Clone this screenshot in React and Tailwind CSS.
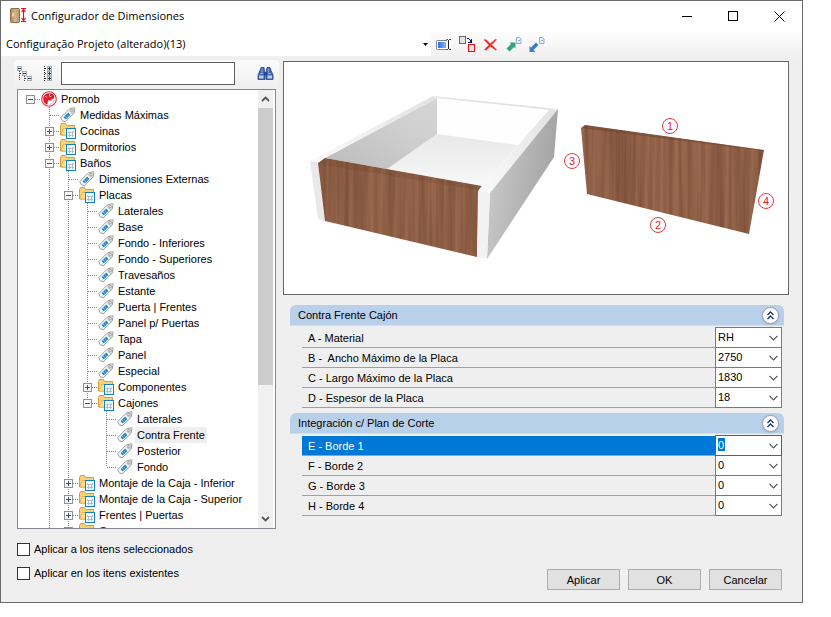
import { useState } from "react";

const tree = [
    { level: 0, label: "Promob", icon: "promob", open: true },
    { level: 1, label: "Medidas Máximas", icon: "tag" },
    { level: 1, label: "Cocinas", icon: "folder", open: false },
    { level: 1, label: "Dormitorios", icon: "folder", open: false },
    { level: 1, label: "Baños", icon: "folder", open: true },
    { level: 2, label: "Dimensiones Externas", icon: "tag" },
    { level: 2, label: "Placas", icon: "folder", open: true },
    { level: 3, label: "Laterales", icon: "tag" },
    { level: 3, label: "Base", icon: "tag" },
    { level: 3, label: "Fondo - Inferiores", icon: "tag" },
    { level: 3, label: "Fondo - Superiores", icon: "tag" },
    { level: 3, label: "Travesaños", icon: "tag" },
    { level: 3, label: "Estante", icon: "tag" },
    { level: 3, label: "Puerta | Frentes", icon: "tag" },
    { level: 3, label: "Panel p/ Puertas", icon: "tag" },
    { level: 3, label: "Tapa", icon: "tag" },
    { level: 3, label: "Panel", icon: "tag" },
    { level: 3, label: "Especial", icon: "tag" },
    { level: 3, label: "Componentes", icon: "folder", open: false },
    { level: 3, label: "Cajones", icon: "folder", open: true, last: true },
    { level: 4, label: "Laterales", icon: "tag" },
    { level: 4, label: "Contra Frente", icon: "tag" },
    { level: 4, label: "Posterior", icon: "tag" },
    { level: 4, label: "Fondo", icon: "tag", last: true },
    { level: 2, label: "Montaje de la Caja - Inferior", icon: "folder", open: false },
    { level: 2, label: "Montaje de la Caja - Superior", icon: "folder", open: false },
    { level: 2, label: "Frentes | Puertas", icon: "folder", open: false },
    { level: 2, label: "Camas", icon: "folder", open: false },
];

const sections = [
    {
        title: "Contra Frente Cajón",
        rows: [
            { id: "a", label: "A - Material", value: "RH" },
            { id: "b", label: "B -  Ancho Máximo de la Placa", value: "2750" },
            { id: "c", label: "C - Largo Máximo de la Placa", value: "1830" },
            { id: "d", label: "D - Espesor de la Placa", value: "18" },
        ],
    },
    {
        title: "Integración c/ Plan de Corte",
        rows: [
            { id: "e", label: "E - Borde 1", value: "0", selected: true },
            { id: "f", label: "F - Borde 2", value: "0" },
            { id: "g", label: "G - Borde 3", value: "0" },
            { id: "h", label: "H - Borde 4", value: "0" },
        ],
    },
];

function PromobIcon() {
    return (
        <svg width="16" height="16" viewBox="0 0 16 16" className="ml-px shrink-0">
            <circle cx="8" cy="8" r="7.3" fill="#fff" stroke="#d8303a" strokeWidth="1.100" />
            <path d="M9 2.200C5 1.800 2 4.500 2.200 8.200c.1 2.600 1.800 4.800 4.200 5.600l.6-4 1.600-.5 1.200.4.8-1.500 2.400-.7.300-2.500C12.500 3.300 11 2.400 9 2.200z" fill="#d8202c" />
            <path d="M8.800 2.500 8.300 5l1.800.8M4.500 5.500l1.700.8" stroke="#fff" strokeWidth=".7" fill="none" />
            <path d="M8 13.500c2.500-.2 4.500-1.800 5.500-4.200" stroke="#f0a0a4" strokeWidth=".8" fill="none" />
        </svg>
    );
}

function TagIcon() {
    return (
        <svg width="16" height="16" viewBox="0 0 16 16" className="ml-px shrink-0">
            <path d="M.8 10.500 9.500 1.800 14.200.7c.6 0 .9.300.8.900L14.200 6l-8.700 8.700-3.200-.9z" fill="#fafafa" stroke="#8f8f8f" strokeWidth=".9" />
            <path d="M9.800 2.500 14.200 1.500 13.500 5.700 12 7.200 8.600 3.800z" fill="#cfcfcf" />
            <path d="m3.500 10.300 4.700-4.700 2.300 2.300-4.700 4.700z" fill="#2389ca" />
            <path d="m5 9 2.200 2.200M6.600 7.400l2.200 2.200" stroke="#8cc9ec" strokeWidth=".7" />
            <circle cx="12" cy="3.700" r="1.200" fill="#fff" stroke="#8a8a8a" strokeWidth=".8" />
        </svg>
    );
}

function FolderIcon() {
    return (
        <svg width="16" height="16" viewBox="0 0 16 16" className="ml-px shrink-0">
            <path d="M.5 12V2.500l1-2h4l1.200 2h7.800V12z" fill="#f7d27a" stroke="#d69c3e" />
            <path d="m1 12 2.500-6.500H14V12z" fill="#fde294" stroke="#e0ab4e" strokeWidth=".8" />
            <rect x="6.500" y="5.500" width="9" height="10" fill="#fff" stroke="#1280bd" />
            <path d="M8 9.500h6M8 12.500h6M9.500 8v6M12.500 8v6" stroke="#a3c0e0" shapeRendering="crispEdges" />
            <path d="M8 8.500h2M12 8.500h2" stroke="#f6d583" shapeRendering="crispEdges" />
        </svg>
    );
}

function Dots({ d }) {
    return (
        <svg width="19" height="16" viewBox="0 0 19 16" className="absolute inset-0" shapeRendering="crispEdges">
            <path d={d} stroke="#808080" strokeDasharray="1 1" fill="none" />
        </svg>
    );
}

function TreeRow({ node, columns, selected, onSelect }) {
    const own = node.level === 0
        ? "M10 8.500H19"
        : node.last
            ? "M9.500 0V8M10 8.500H19"
            : "M9.500 0V16M10 8.500H19";
    return (
        <li role="treeitem" aria-selected={selected} className="flex h-4 items-center">
            {columns.map((line, i) => (
                <span key={i} className="relative h-4 w-[19px] shrink-0">
                    {line && <Dots d="M9.500 0V16" />}
                </span>
            ))}
            <span className="relative flex h-4 w-[19px] shrink-0 items-center justify-center">
                <Dots d={own} />
                {node.open !== undefined && (
                    <button type="button" aria-label={node.label} className="relative block h-[9px] w-[9px]">
                        <svg width="9" height="9" viewBox="0 0 9 9" shapeRendering="crispEdges">
                            <rect x=".5" y=".5" width="8" height="8" fill="#f8f8f8" stroke="#919191" />
                            <path d={node.open ? "M2 4.500h5" : "M2 4.500h5M4.500 2v5"} stroke="#33508f" />
                        </svg>
                    </button>
                )}
            </span>
            {node.icon === "promob" && <PromobIcon />}
            {node.icon === "tag" && <TagIcon />}
            {node.icon === "folder" && <FolderIcon />}
            <button
                type="button"
                onClick={onSelect}
                className={`ml-0.5 h-4 shrink-0 px-0.5 leading-4 whitespace-nowrap ${selected ? "bg-[#efefef]" : ""}`}
            >
                {node.label}
            </button>
        </li>
    );
}

function TreeView() {
    const [selected, setSelected] = useState(21);

    const rows = tree.map((node, index) => {
        const columns = [];
        for (let level = 0; level < node.level; level++) {
            let more = false;
            for (let i = index + 1; i < tree.length && level > 0; i++) {
                if (tree[i].level < level) break;
                if (tree[i].level === level) {
                    more = true;
                    break;
                }
            }
            columns.push(more || level === 1);
        }
        return { node, columns };
    });

    return (
        <div className="mx-[3px] flex min-h-0 flex-1 border border-[#828790] bg-white">
            <ul role="tree" className="min-h-0 flex-1 overflow-hidden pt-px pl-[3px]">
                {rows.map((row, i) => (
                    <TreeRow
                        key={i}
                        node={row.node}
                        columns={row.columns}
                        selected={i === selected}
                        onSelect={() => setSelected(i)}
                    />
                ))}
            </ul>
            <div className="mr-0.5 flex w-[15px] flex-col bg-[#f0f0f0]">
                <button type="button" aria-label="Subir" className="flex h-[18px] items-center justify-center">
                    <svg width="9" height="6" viewBox="0 0 9 6">
                        <path d="m1 5 3.500-3.500L8 5" fill="none" stroke="#555" strokeWidth="1.800" />
                    </svg>
                </button>
                <div className="flex-1">
                    <div className="h-[69%] bg-[#cdcdcd]" />
                </div>
                <button type="button" aria-label="Bajar" className="flex h-[18px] items-center justify-center">
                    <svg width="9" height="6" viewBox="0 0 9 6">
                        <path d="M1 1l3.500 3.500L8 1" fill="none" stroke="#555" strokeWidth="1.800" />
                    </svg>
                </button>
            </div>
        </div>
    );
}

function TitleBar() {
    return (
        <header className="flex h-[30px] items-center bg-white pl-2">
            <svg width="17" height="16" viewBox="0 0 17 16" className="mr-[5px] shrink-0">
                <defs>
                    <linearGradient id="door">
                        <stop offset="0" stopColor="#a48358" />
                        <stop offset=".5" stopColor="#d6b78a" />
                        <stop offset="1" stopColor="#b6956a" />
                    </linearGradient>
                </defs>
                <rect x="1.500" y=".5" width="9" height="14" rx="1" fill="url(#door)" stroke="#8a6c48" />
                <path d="M4 5v3.500" stroke="#f5eee2" strokeWidth="1.300" />
                <path d="M12 .5h5M12 13.500h5M14.500 1v12M12.500 4l2-2.500 2 2.500M12.500 10l2 2.500 2-2.500" fill="none" stroke="#e0102a" strokeWidth="1.200" />
            </svg>
            <h1 className="flex-1 font-['Open_Sans',sans-serif] text-[11px]">Configurador de Dimensiones</h1>
            <button type="button" aria-label="Minimizar" className="flex h-full w-[46px] items-center justify-center">
                <svg width="11" height="11" viewBox="0 0 11 11" shapeRendering="crispEdges">
                    <path d="M0 5.500h10" stroke="#000" />
                </svg>
            </button>
            <button type="button" aria-label="Maximizar" className="flex h-full w-[46px] items-center justify-center">
                <svg width="10" height="10" viewBox="0 0 10 10" shapeRendering="crispEdges">
                    <rect x=".5" y=".5" width="9" height="9" fill="none" stroke="#000" />
                </svg>
            </button>
            <button type="button" aria-label="Cerrar" className="flex h-full w-[46px] items-center justify-center">
                <svg width="11" height="11" viewBox="0 0 11 11">
                    <path d="m.5.5 10 10M10.500.5l-10 10" stroke="#000" />
                </svg>
            </button>
        </header>
    );
}

function Toolbar() {
    return (
        <div className="flex h-[29px] items-start bg-linear-to-b from-[#fdfdfd] to-[#efefef]">
            <button
                type="button"
                className="flex h-[25px] w-[430px] items-center bg-white pt-0.5 pr-[3px] pl-[5px] text-left font-['Open_Sans',sans-serif] text-[11px]"
            >
                <span className="flex-1">Configuração Projeto (alterado)(13)</span>
                <svg width="5" height="3" viewBox="0 0 5 3">
                    <path d="M0 0h5L2.500 3z" fill="#000" />
                </svg>
            </button>
            <div className="flex h-[27px] items-center gap-[7px] pl-[5px]">
                <button type="button" aria-label="Renombrar">
                    <svg width="16" height="16" viewBox="0 0 16 16">
                        <defs>
                            <linearGradient id="field">
                                <stop offset="0" stopColor="#2f6fdc" />
                                <stop offset="1" stopColor="#8ab6f6" />
                            </linearGradient>
                        </defs>
                        <rect x=".5" y="3.500" width="12" height="9" rx="1" fill="#fff" stroke="#7d8799" />
                        <rect x="2" y="5" width="8" height="6" fill="url(#field)" />
                        <path d="M12.500 3v10" stroke="#fff" strokeWidth="3" />
                        <path d="M10.500 2.500h1l1 1 1-1h1.500M12.500 3.500v8M10.500 12.500h1l1-1 1 1h1.500" fill="none" stroke="#222" />
                    </svg>
                </button>
                <button type="button" aria-label="Duplicar">
                    <svg width="17" height="17" viewBox="0 0 17 17" shapeRendering="crispEdges">
                        <rect x=".5" y=".5" width="6" height="7" fill="#e4e4e4" stroke="#6a6a6a" />
                        <rect x="9.500" y="8.500" width="6" height="7" fill="#e4e4e4" stroke="#e81010" />
                        <path d="M8 2.500h2M10 3.500h1M11 4.500h1M12.500 3v4M9 6.500h4M11 5.500h1" stroke="#10107a" />
                    </svg>
                </button>
                <button type="button" aria-label="Eliminar">
                    <svg width="16" height="16" viewBox="0 0 16 16">
                        <path d="M.8 2.800c.8-1 1.800-.8 2.800.2L7.200 6.500 12.500 2l1.200.8-5 5L13.800 12.500l-1 .8L7.200 9.500 3 13.500 1.200 12.500 5.800 8z" fill="#ee2020" stroke="#f68a8a" strokeWidth=".5" />
                    </svg>
                </button>
                <button type="button" aria-label="Exportar">
                    <svg width="16" height="16" viewBox="0 0 16 16">
                        <path d="M10.500.5h3L15 2v4.500h-4.500z" fill="#e8f1fb" stroke="#8daed8" />
                        <path d="M12 3.500h2" stroke="#8daed8" />
                        <path d="m.5 11.500 4.500-4.500L3.500 5.500H9.500v6L8 10 3.500 14.500z" fill="#35a47d" />
                    </svg>
                </button>
                <button type="button" aria-label="Importar">
                    <svg width="16" height="16" viewBox="0 0 16 16">
                        <path d="M10.500.5h3L15 2v4.500h-4.500z" fill="#e8f1fb" stroke="#8daed8" />
                        <path d="M12 3.500h2" stroke="#8daed8" />
                        <path d="M.5 15V9L2 10.500 7 5.500 9.500 8l-5 5L6.500 15z" fill="#3d7cc9" />
                    </svg>
                </button>
            </div>
        </div>
    );
}

function SearchBar() {
    return (
        <div className="flex h-[29px] items-center rounded-sm bg-linear-to-b from-[#fbfbfb] to-[#efefef] pb-0.5 pl-[3px]">
            <button type="button" aria-label="Contraer todo">
                <svg width="16" height="16" viewBox="0 0 16 16" shapeRendering="crispEdges">
                    <path d="M2.500 5v10M3 7.500h3M7.500 10v6M8 12.500h3" stroke="#444" strokeDasharray="1 1" />
                    <path d="M.5.5h4v4h-4zM5.500 5.500h4v4h-4zM10.500 10.500h4v4h-4z" fill="#eef1f5" stroke="#a4acb8" />
                    <path d="M1 2.500h3M6 7.500h3M11 12.500h3" stroke="#26374f" />
                </svg>
            </button>
            <button type="button" aria-label="Expandir todo" className="ml-2">
                <svg width="16" height="16" viewBox="0 0 16 16" shapeRendering="crispEdges">
                    <path d="M3.500 0v15M4 2.500h3M4 7.500h3M4 12.500h3" stroke="#222" strokeDasharray="1 1" />
                    <path d="M6.500.5h4v4h-4zM6.500 5.500h4v4h-4zM6.500 10.500h4v4h-4z" fill="#eef1f5" stroke="#a4acb8" />
                    <path d="M7 2.500h3M7 7.500h3M7 12.500h3M8.500 1v3M8.500 6v3M8.500 11v3" stroke="#26374f" />
                </svg>
            </button>
            <input
                type="text"
                aria-label="Buscar"
                className="ml-1 h-[23px] w-[174px] border border-[#5f5f5f] bg-white px-1 outline-none"
            />
            <button type="button" aria-label="Buscar" className="ml-[22px]">
                <svg width="17" height="16" viewBox="0 0 17 16">
                    <path d="M4 1.500h3l.5 3 .5 2v7H1V9l2-4.500zM10 1.500h3l1 3L16 9v4.500H9v-7l.5-2z" fill="#4468b0" stroke="#24457f" strokeWidth=".8" />
                    <path d="M7 6h3v3.500H7z" fill="#27478a" />
                    <path d="M2 9.500h4.500v3H2zM10.500 9.500H15v3h-4.500z" fill="#b7cdf0" />
                    <path d="M5 2.500v4M11.500 2.500v4M3 7.500h3M11 7.500h3" stroke="#9ab8e8" strokeWidth=".8" />
                </svg>
            </button>
        </div>
    );
}

const marks = [
    { n: 1, x: 386, y: 64 },
    { n: 2, x: 374, y: 163 },
    { n: 3, x: 288, y: 99 },
    { n: 4, x: 482, y: 139 },
];

function Preview() {
    return (
        <div className="h-[234px] border border-[#666] bg-white">
            <svg viewBox="0 0 504 232" className="h-full w-full">
                <defs>
                    <filter id="wood" x="0" y="0" width="100%" height="100%" colorInterpolationFilters="sRGB">
                        <feTurbulence type="fractalNoise" baseFrequency="0.2 0.005" numOctaves="3" seed="8" />
                        <feColorMatrix values="0.2 0 0 0 0.45  0.17 0 0 0 0.28  0.15 0 0 0 0.195  0 0 0 0 1" />
                    </filter>
                    <clipPath id="front">
                        <path d="M34 101 41 96 198 124 195 128 193 195 41 159z" />
                    </clipPath>
                    <clipPath id="board">
                        <path d="M297 66 301 63 480 88 465 172 303 132z" />
                    </clipPath>
                    <linearGradient id="inner" x1="0" y1="1" x2="1" y2="0">
                        <stop offset="0" stopColor="#bcbcbc" />
                        <stop offset=".6" stopColor="#cecece" />
                        <stop offset="1" stopColor="#d6d6d6" />
                    </linearGradient>
                    <linearGradient id="outer" x1="0" y1="0" x2="1" y2=".3">
                        <stop offset="0" stopColor="#cfcfcf" />
                        <stop offset="1" stopColor="#a3a3a3" />
                    </linearGradient>
                    <linearGradient id="base" x1="0" y1="0" x2="0" y2="1">
                        <stop offset="0" stopColor="#e8e8e8" />
                        <stop offset="1" stopColor="#f8f8f8" />
                    </linearGradient>
                    <linearGradient id="edge" x1="0" y1="1" x2="1" y2="0">
                        <stop offset="0" stopColor="#fafafa" />
                        <stop offset="1" stopColor="#e2e2e2" />
                    </linearGradient>
                </defs>
                <path d="M153 36 265 48 234 83 153 72z" fill="#fefefe" />
                <path d="M153 72 234 83 198 124 103 107z" fill="url(#base)" />
                <path d="M153 36V72L103 107 41 96z" fill="url(#inner)" />
                <path d="M26 99 149 34 153 36 41 96 34 100z" fill="url(#edge)" />
                <path d="M149 34 274 47 265 48 153 36z" fill="#e2e2e2" />
                <path d="M26 99 34 100 41 159 34 157z" fill="#e9e9e9" />
                <g clipPath="url(#front)">
                    <rect x="30" y="90" width="172" height="108" filter="url(#wood)" />
                    <path d="M34 102 41 96 198 124 195 128z" fill="#6d402a" opacity=".22" />
                </g>
                <path d="M265 48 274 47 206 132 194 129 198 124z" fill="url(#edge)" />
                <path d="M274 47 270 95 203 197 206 131z" fill="url(#outer)" />
                <path d="M194 129 206 131 203 197 193 195z" fill="#f2f2f2" />
                <g clipPath="url(#board)">
                    <rect x="295" y="60" width="188" height="115" filter="url(#wood)" />
                    <path d="M297 66 301 63 480 88 480 89z" fill="#6d402a" opacity=".45" />
                </g>
                {marks.map((m) => (
                    <g key={m.n}>
                        <circle cx={m.x} cy={m.y} r="7.500" fill="#fff" stroke="#e23a3a" />
                        <text
                            x={m.x}
                            y={m.y + 4}
                            textAnchor="middle"
                            fill="#e02424"
                            className="font-['Liberation_Sans',sans-serif] text-[11px]"
                        >
                            {m.n}
                        </text>
                    </g>
                ))}
            </svg>
        </div>
    );
}

function PropertyRow({ row }) {
    return (
        <div className="flex h-5 items-start">
            <label
                htmlFor={row.id}
                className={`h-5 flex-1 border-b border-[#a0a0a0] pl-1.5 leading-5 whitespace-pre ${row.selected ? "bg-[#0078d7] text-white" : ""}`}
            >
                {row.label}
            </label>
            <div className="relative -mt-px h-[21px] w-[67px]">
                <select
                    id={row.id}
                    defaultValue={row.value}
                    className={`block h-[21px] w-full appearance-none border pb-0.5 pl-0.5 text-[11px] leading-4 outline-none ${row.selected
                        ? "relative z-10 border-[#0078d7] bg-white bg-[linear-gradient(#0078d7,#0078d7)] bg-[length:7px_13px] bg-[position:2px_2px] bg-no-repeat text-white"
                        : "border-[#7a7a7a] bg-white text-black"
                        }`}
                >
                    <option>{row.value}</option>
                </select>
                <svg width="9" height="6" viewBox="0 0 9 6" className="pointer-events-none absolute top-2 right-1 z-20">
                    <path d="m.5.8 4 4 4-4" fill="none" stroke="#555" strokeWidth="1.200" />
                </svg>
            </div>
        </div>
    );
}

function Section({ section }) {
    return (
        <section>
            <div className="flex h-[21px] items-center rounded-t-md border-b border-[#d3e0f0] bg-[#b9d0ea] pr-[5px] pl-2">
                <h2 className="flex-1">{section.title}</h2>
                <button
                    type="button"
                    aria-label={section.title}
                    className="flex h-[17px] w-[17px] items-center justify-center rounded-full border border-[#9a9db0] bg-white shadow-sm"
                >
                    <svg width="7" height="9" viewBox="0 0 7 9">
                        <path d="m.5 4 3-3 3 3M.5 8l3-3 3 3" fill="none" stroke="#1f3468" strokeWidth="1.300" />
                    </svg>
                </button>
            </div>
            <div className="mt-0.5 mr-0.5 ml-3">
                {section.rows.map((row) => (
                    <PropertyRow key={row.id} row={row} />
                ))}
            </div>
        </section>
    );
}

function Check({ label }) {
    return (
        <label className="flex h-[13px] items-center gap-1">
            <input type="checkbox" className="h-[13px] w-[13px] appearance-none border border-[#333] bg-white checked:bg-[#0078d7]" />
            {label}
        </label>
    );
}

export default function App() {
    return (
        <div className="h-screen bg-white pr-7 pb-3.5 font-['Liberation_Sans',Arial,sans-serif] text-[11px] text-black">
            <div className="flex h-full flex-col border border-[#6b6b6b] bg-[#efefef]">
                <TitleBar />
                <Toolbar />
                <main className="flex min-h-0 flex-1 gap-1 pr-[13px] pl-[13px]">
                    <div className="flex w-[265px] shrink-0 flex-col">
                        <SearchBar />
                        <TreeView />
                        <div className="flex flex-col gap-[11px] pt-3.5 pb-[22px] pl-[3px]">
                            <Check label="Aplicar a los itens seleccionados" />
                            <Check label="Aplicar en los itens existentes" />
                        </div>
                    </div>
                    <div className="flex min-w-0 flex-1 flex-col pt-px">
                        <Preview />
                        <div className="mt-2.5 mr-[5px] ml-[7px] flex flex-col gap-[5px]">
                            {sections.map((section) => (
                                <Section key={section.title} section={section} />
                            ))}
                        </div>
                        <div className="mt-auto flex justify-end gap-2 pr-[7px] pb-3">
                            {["Aplicar", "OK", "Cancelar"].map((label) => (
                                <button
                                    key={label}
                                    type="button"
                                    className="h-[21px] w-[73px] border border-[#adadad] bg-[#e1e1e1] leading-4"
                                >
                                    {label}
                                </button>
                            ))}
                        </div>
                    </div>
                </main>
            </div>
        </div>
    );
}
